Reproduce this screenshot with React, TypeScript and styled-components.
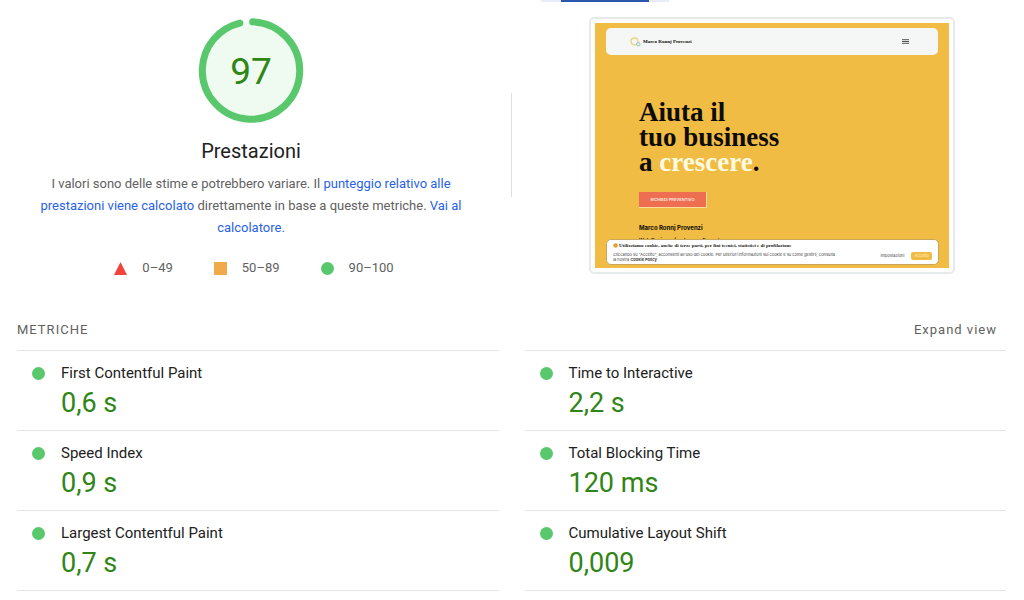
import React from "react";
import styled, { createGlobalStyle } from "styled-components";

const GlobalStyle = createGlobalStyle`
  * { box-sizing: border-box; }
  body {
    margin: 0;
    background: #fff;
    color: #212121;
    font-family: Roboto, "Liberation Sans", sans-serif;
  }
  h1, h2, h3, p, ul, dl, dt, dd { margin: 0; padding: 0; font-weight: 400; }
`;

const Page = styled.main`
  padding: 0 18px 8px 17px;
`;

const TabStrip = styled.div`
  display: flex;
  justify-content: center;
  height: 2px;
  padding-left: 186px;
`;

const TabEdge = styled.span`
  width: 20px;
  background: #e9edfa;
`;

const TabActive = styled.span`
  width: 88px;
  background: #2a56ad;
`;

const Summary = styled.section`
  display: grid;
  grid-template-columns: 1fr 1px 1fr;
  column-gap: 26px;
  padding-top: 15px;
`;

const Divider = styled.div`
  height: 104px;
  margin-top: 76px;
  background: #e0e0e0;
`;

const ScoreColumn = styled.div`
  display: flex;
  flex-direction: column;
  align-items: center;
`;

const Gauge = styled.svg`
  display: block;
  width: 106px;
  height: 106px;
`;

const ScoreTitle = styled.h1`
  margin-top: 15px;
  font-size: 20px;
  line-height: 26px;
`;

const Description = styled.p`
  margin-top: 9px;
  padding: 0 16px;
  font-size: 13px;
  line-height: 22px;
  text-align: center;
  color: #616161;
`;

const TextLink = styled.a`
  color: #2962e8;
  text-decoration: none;
`;

const Legend = styled.ul`
  display: flex;
  gap: 41px;
  margin-top: 19px;
  padding-left: 6px;
  list-style: none;
`;

const LegendItem = styled.li`
  display: flex;
  align-items: center;
  gap: 15px;
  font-size: 13px;
  line-height: 20px;
  color: #616161;
`;

const Mark = styled.svg`
  display: block;
  width: 13px;
  height: 13px;
`;

const PreviewColumn = styled.div`
  display: flex;
  justify-content: center;
  align-items: flex-start;
`;

const PreviewFrame = styled.div`
  width: 366px;
  padding: 4px;
  border: 2px solid #e7eaea;
  border-radius: 5px;
`;

const Site = styled.div`
  position: relative;
  height: 245px;
  padding: 5px 11px 0;
  overflow: hidden;
  background: #f0bc43;
  color: #0d0b06;
`;

const SiteHeader = styled.div`
  display: flex;
  align-items: center;
  justify-content: space-between;
  height: 27px;
  padding: 0 29px 0 24px;
  border-radius: 5px;
  background: #f5f7f6;
`;

const Brand = styled.div`
  display: flex;
  align-items: center;
  gap: 2px;
  font-family: "Liberation Serif", serif;
  font-size: 5px;
  font-weight: 700;
`;

const Hero = styled.div`
  padding: 45px 0 0 33px;
`;

const HeroTitle = styled.h2`
  font-family: "Liberation Serif", serif;
  font-size: 27px;
  font-weight: 700;
  line-height: 25px;
`;

const Highlight = styled.span`
  color: #fffbe0;
`;

const QuoteButton = styled.button`
  display: block;
  width: 68px;
  height: 16px;
  margin-top: 17px;
  padding: 0;
  border: 1px solid #f8dc9c;
  border-width: 0 1px 1px 0;
  background: #ee6e52;
  color: #fbe3d4;
  font-family: Inter, sans-serif;
  font-size: 4px;
  font-weight: 700;
`;

const Author = styled.p`
  margin-top: 14px;
  font-family: Inter, sans-serif;
  font-size: 6px;
  font-weight: 700;
  line-height: 12px;
`;

const Role = styled.p`
  font-family: Inter, sans-serif;
  font-size: 5px;
  font-weight: 600;
  line-height: 12px;
`;

const Cookie = styled.div`
  position: absolute;
  right: 10px;
  bottom: 3px;
  left: 11px;
  display: flex;
  align-items: center;
  justify-content: space-between;
  height: 26px;
  padding: 0 6px;
  border: 1px solid #c8a75c;
  border-radius: 5px;
  background: #fff;
  font-family: Inter, sans-serif;
  font-size: 4px;
  line-height: 5px;
  color: #444;
`;

const CookieTitle = styled.h3`
  display: flex;
  align-items: center;
  gap: 1px;
  margin-bottom: 3px;
  font-family: "Liberation Serif", serif;
  font-size: 5px;
  font-weight: 700;
  line-height: 6px;
  color: #222;
`;

const CookieActions = styled.div`
  display: flex;
  align-items: center;
  gap: 7px;
  margin-top: 8px;
`;

const CookieButton = styled.button<{ $primary?: boolean }>`
  height: 8px;
  padding: 0 ${(p) => (p.$primary ? 3 : 0)}px;
  border: 0;
  border-radius: 2px;
  background: ${(p) => (p.$primary ? "#f0bc43" : "transparent")};
  color: ${(p) => (p.$primary ? "#fdf0c8" : "#444")};
  font-family: Inter, sans-serif;
  font-size: 4px;
  line-height: 8px;
`;

const MetricsHeader = styled.div`
  display: flex;
  align-items: center;
  justify-content: space-between;
  margin-top: 41px;
  padding-right: 9px;
  color: #616161;
`;

const MetricsTitle = styled.h2`
  font-size: 13px;
  line-height: 22px;
  letter-spacing: 1px;
`;

const ExpandButton = styled.button`
  padding: 0;
  border: 0;
  background: none;
  color: #616161;
  font-family: inherit;
  font-size: 13px;
  line-height: 22px;
  letter-spacing: 1px;
`;

const Metrics = styled.section`
  display: grid;
  grid-template-columns: 1fr 1fr;
  column-gap: 26px;
  margin-top: 9px;
`;

const MetricColumn = styled.dl`
  border-bottom: 1px solid #e4e4e4;
`;

const Metric = styled.div`
  display: grid;
  grid-template-columns: 13px 1fr;
  column-gap: 16px;
  align-items: center;
  align-content: start;
  height: 80px;
  padding: 11px 15px 0;
  border-top: 1px solid #e4e4e4;
`;

const MetricName = styled.dt`
  font-size: 15px;
  line-height: 22px;
`;

const MetricValue = styled.dd`
  grid-column: 2;
  font-size: 27px;
  line-height: 38px;
  color: #2f8516;
`;

const GREEN = "#59c86c";

function CircleMark() {
  return (
    <Mark viewBox="0 0 13 13" aria-hidden="true">
      <circle cx="6.5" cy="6.5" r="6.5" fill={GREEN} />
    </Mark>
  );
}

const columns = [
  [
    ["First Contentful Paint", "0,6 s"],
    ["Speed Index", "0,9 s"],
    ["Largest Contentful Paint", "0,7 s"],
  ],
  [
    ["Time to Interactive", "2,2 s"],
    ["Total Blocking Time", "120 ms"],
    ["Cumulative Layout Shift", "0,009"],
  ],
];

export default function App() {
  return (
    <>
      <GlobalStyle />
      <Page>
        <TabStrip>
          <TabEdge />
          <TabActive />
          <TabEdge />
        </TabStrip>
        <Summary>
          <ScoreColumn>
            <Gauge viewBox="0 0 106 106" role="img" aria-label="97">
              <circle cx="53" cy="53.5" r="49" fill="#effaf1" />
              <circle
                cx="53"
                cy="53.5"
                r="48.7"
                fill="none"
                stroke={GREEN}
                strokeWidth="7"
                strokeLinecap="round"
                strokeDasharray="292.5 306"
                transform="rotate(-88 53 53.5)"
              />
              <text x="53" y="67" textAnchor="middle" fontSize="37" fill="#2f8516">
                97
              </text>
            </Gauge>
            <ScoreTitle>Prestazioni</ScoreTitle>
            <Description>
              I valori sono delle stime e potrebbero variare. Il{" "}
              <TextLink href="#punteggio">punteggio relativo alle prestazioni viene calcolato</TextLink>{" "}
              direttamente in base a queste metriche. <TextLink href="#calcolatore">Vai al calcolatore.</TextLink>
            </Description>
            <Legend>
              <LegendItem>
                <Mark viewBox="0 0 13 13" aria-hidden="true">
                  <path d="M6.5 0 13 13H0Z" fill="#f0433a" />
                </Mark>
                0–49
              </LegendItem>
              <LegendItem>
                <Mark viewBox="0 0 13 13" aria-hidden="true">
                  <path d="M0 0h13v13H0Z" fill="#f2a94a" />
                </Mark>
                50–89
              </LegendItem>
              <LegendItem>
                <CircleMark />
                90–100
              </LegendItem>
            </Legend>
          </ScoreColumn>
          <Divider />
          <PreviewColumn>
            <PreviewFrame>
              <Site>
                <SiteHeader>
                  <Brand>
                    <svg width="11" height="10" viewBox="0 0 11 10" aria-hidden="true">
                      <circle cx="4.5" cy="4.3" r="3.5" fill="none" stroke="#edcf72" strokeWidth="1.2" />
                      <circle cx="8.3" cy="7.2" r="1.8" fill="#e8f3f2" stroke="#8bbfc4" strokeWidth="0.9" />
                    </svg>
                    Marco Ronnj Provenzi
                  </Brand>
                  <svg width="7" height="5" viewBox="0 0 7 5" aria-hidden="true">
                    <path d="M0 .7h7M0 2.5h7M0 4.3h7" stroke="#555" strokeWidth="1" />
                  </svg>
                </SiteHeader>
                <Hero>
                  <HeroTitle>
                    Aiuta il
                    <br />
                    tuo business
                    <br />a <Highlight>crescere</Highlight>.
                  </HeroTitle>
                  <QuoteButton type="button">RICHIEDI PREVENTIVO</QuoteButton>
                  <Author>Marco Ronnj Provenzi</Author>
                  <Role>Web Designer freelance e Formatore</Role>
                </Hero>
                <Cookie>
                  <div>
                    <CookieTitle>
                      <svg width="5" height="5" viewBox="0 0 5 5" aria-hidden="true">
                        <circle cx="2.5" cy="2.5" r="2.3" fill="#e5a83c" />
                        <path d="M1.4 1.8h.7M3 3.2h.7M2.8 1.4h.6" stroke="#a56d1d" strokeWidth=".6" />
                      </svg>
                      Utilizziamo cookie, anche di terze parti, per fini tecnici, statistici e di profilazione
                    </CookieTitle>
                    Cliccando su "Accetto", acconsenti all'uso dei cookie. Per ulteriori informazioni sui cookie e su
                    come gestirli, consulta
                    <br />
                    la nostra <b>Cookie Policy</b>
                  </div>
                  <CookieActions>
                    <CookieButton type="button">Impostazioni</CookieButton>
                    <CookieButton type="button" $primary>
                      Accetto
                    </CookieButton>
                  </CookieActions>
                </Cookie>
              </Site>
            </PreviewFrame>
          </PreviewColumn>
        </Summary>
        <MetricsHeader>
          <MetricsTitle>METRICHE</MetricsTitle>
          <ExpandButton type="button">Expand view</ExpandButton>
        </MetricsHeader>
        <Metrics>
          {columns.map((metrics, i) => (
            <MetricColumn key={i}>
              {metrics.map(([name, value]) => (
                <Metric key={name}>
                  <CircleMark />
                  <MetricName>{name}</MetricName>
                  <MetricValue>{value}</MetricValue>
                </Metric>
              ))}
            </MetricColumn>
          ))}
        </Metrics>
      </Page>
    </>
  );
}
